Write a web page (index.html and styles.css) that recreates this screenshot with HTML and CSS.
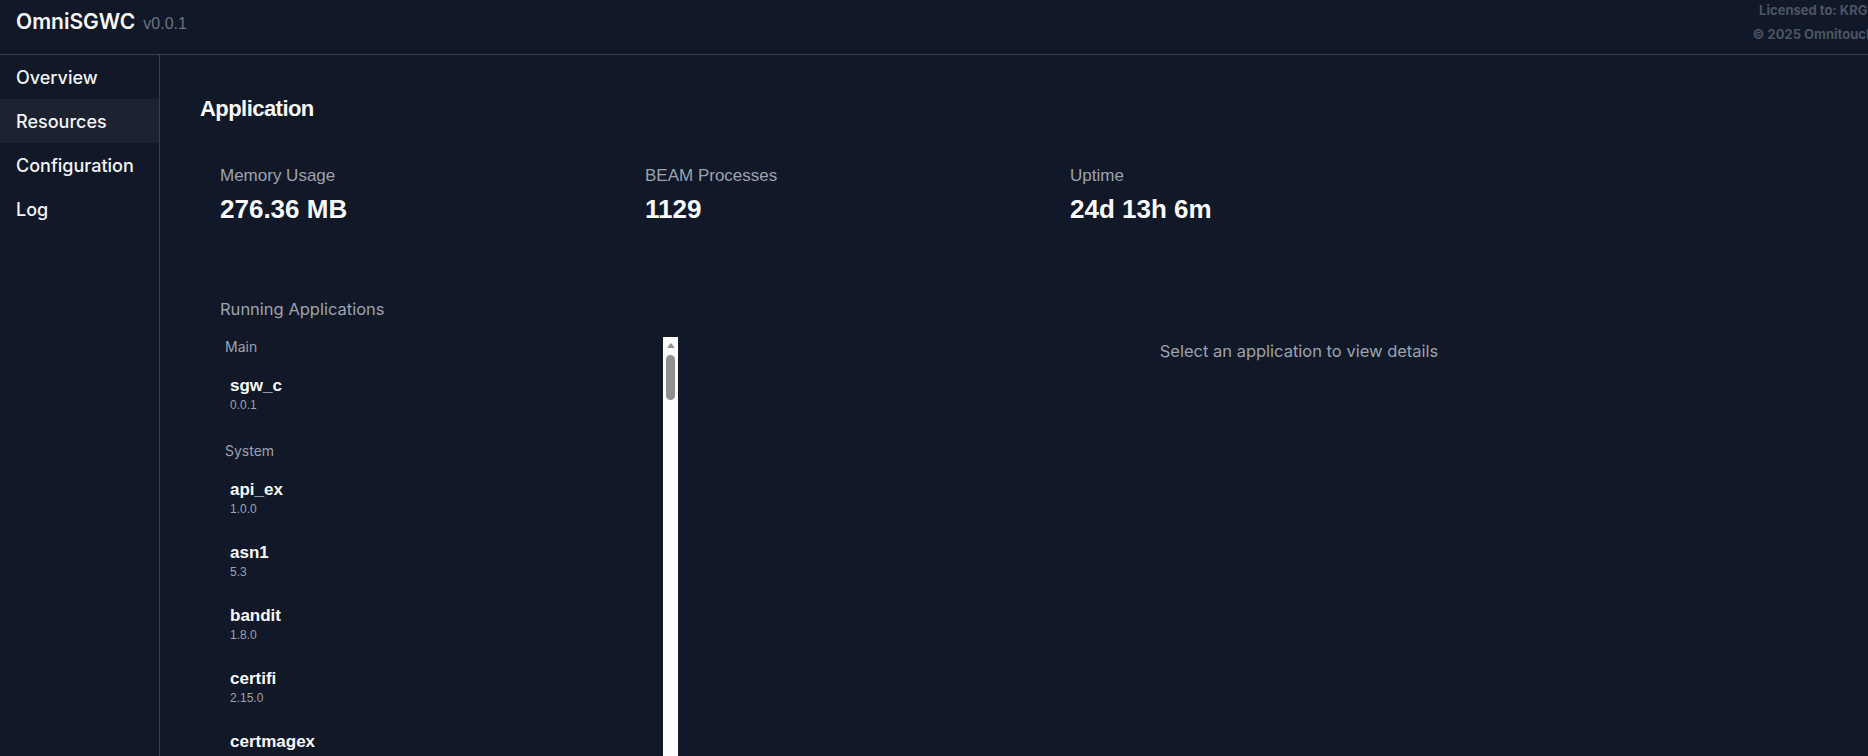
FILE: index.html
```html
<!DOCTYPE html>
<html lang="en">
<head>
<meta charset="utf-8">
<title>OmniSGWC - Resources</title>
<link rel="stylesheet" href="styles.css">
</head>
<body>
<div class="app">
  <header class="topbar">
    <div class="brand">
      <span class="brand-name">OmniSGWC</span>
      <span class="brand-ver">v0.0.1</span>
    </div>
    <div class="license">
      <div class="license-line">Licensed to: KRG</div>
      <div class="license-line">© 2025 Omnitouch</div>
    </div>
  </header>
  <div class="shell">
    <nav class="sidebar">
      <a class="nav-item">Overview</a>
      <a class="nav-item active">Resources</a>
      <a class="nav-item">Configuration</a>
      <a class="nav-item">Log</a>
    </nav>
    <main class="main">
      <h1 class="title">Application</h1>
      <section class="stats">
        <div class="stat">
          <div class="stat-label">Memory Usage</div>
          <div class="stat-value">276.36 MB</div>
        </div>
        <div class="stat">
          <div class="stat-label">BEAM Processes</div>
          <div class="stat-value">1129</div>
        </div>
        <div class="stat">
          <div class="stat-label">Uptime</div>
          <div class="stat-value">24d 13h 6m</div>
        </div>
      </section>
      <section class="apps">
        <div class="apps-label">Running Applications</div>
        <div class="apps-grid">
          <div class="apps-list">
            <div class="apps-scroll">
              <div class="group">
                <div class="group-title">Main</div>
                <div class="app-item"><div class="app-name">sgw_c</div><div class="app-ver">0.0.1</div></div>
              </div>
              <div class="group">
                <div class="group-title">System</div>
                <div class="app-item"><div class="app-name">api_ex</div><div class="app-ver">1.0.0</div></div>
                <div class="app-item"><div class="app-name">asn1</div><div class="app-ver">5.3</div></div>
                <div class="app-item"><div class="app-name">bandit</div><div class="app-ver">1.8.0</div></div>
                <div class="app-item"><div class="app-name">certifi</div><div class="app-ver">2.15.0</div></div>
                <div class="app-item"><div class="app-name">certmagex</div><div class="app-ver">0.1.0</div></div>
                <div class="app-item"><div class="app-name">combine</div><div class="app-ver">0.10.0</div></div>
                <div class="app-item"><div class="app-name">compiler</div><div class="app-ver">8.5.4</div></div>
                <div class="app-item"><div class="app-name">cowboy</div><div class="app-ver">2.13.0</div></div>
                <div class="app-item"><div class="app-name">cowlib</div><div class="app-ver">2.15.0</div></div>
                <div class="app-item"><div class="app-name">crypto</div><div class="app-ver">5.5.3</div></div>
                <div class="app-item"><div class="app-name">decimal</div><div class="app-ver">2.3.0</div></div>
                <div class="app-item"><div class="app-name">diameter</div><div class="app-ver">2.4.1</div></div>
              </div>
            </div>
            <div class="scrollbar" aria-hidden="true">
              <span class="scroll-arrow"></span>
              <span class="scroll-thumb"></span>
            </div>
          </div>
          <div class="apps-detail">
            <p class="detail-empty">Select an application to view details</p>
          </div>
        </div>
      </section>
    </main>
  </div>
</div>
</body>
</html>
```

FILE: styles.css
```css
html, body {
  margin: 0;
  padding: 0;
  height: 100%;
  overflow: hidden;
  background: #111827;
}

.app {
  width: 1956px;
  height: 756px;
  display: flex;
  flex-direction: column;
  color: #f9fafb;
  font-family: Inter, "Liberation Sans", sans-serif;
}

/* ---------- top bar ---------- */
.topbar {
  height: 54px;
  flex-shrink: 0;
  border-bottom: 1px solid #374151;
  display: flex;
  justify-content: space-between;
  align-items: flex-start;
  padding: 0 16px;
}

.brand {
  display: flex;
  align-items: baseline;
  padding-top: 8px;
}

.brand-name {
  font-size: 21px;
  line-height: 28px;
  font-weight: 600;
  color: #f9fafb;
}

.brand-ver {
  margin-left: 8px;
  font-family: "Liberation Sans", Arial, sans-serif;
  font-size: 16px;
  color: #6b7280;
}

.license {
  margin-right: 66px;
  padding-top: 2px;
  display: flex;
  flex-direction: column;
  align-items: center;
  gap: 8px;
  font-size: 13px;
  line-height: 16px;
  font-weight: 700;
  color: #4b5563;
  white-space: nowrap;
}

/* ---------- layout ---------- */
.shell {
  flex: 1;
  display: flex;
  min-height: 0;
}

.sidebar {
  width: 160px;
  flex-shrink: 0;
  box-sizing: border-box;
  border-right: 1px solid #374151;
  display: flex;
  flex-direction: column;
}

.nav-item {
  height: 44px;
  display: flex;
  align-items: center;
  padding: 0 16px;
  font-size: 18px;
  font-weight: 500;
  color: #f3f4f6;
  cursor: pointer;
}

.nav-item.active {
  background: #1c2230;
}

.main {
  flex: 1;
  padding: 40px;
  min-width: 0;
}

.title {
  margin: 0 0 21px;
  font-family: "Liberation Sans", Arial, sans-serif;
  font-size: 22px;
  line-height: 28px;
  font-weight: 700;
  letter-spacing: -0.025em;
  color: #f9fafb;
}

/* ---------- stats ---------- */
.stats {
  padding: 22px 20px 20px;
  display: grid;
  grid-template-columns: repeat(4, 1fr);
  gap: 24px;
}

.stat-label {
  font-family: "Liberation Sans", Arial, sans-serif;
  font-size: 17px;
  line-height: 20px;
  color: #9ca3af;
  margin-bottom: 7px;
}

.stat-value {
  font-family: "Liberation Sans", Arial, sans-serif;
  font-size: 26px;
  line-height: 32px;
  font-weight: 700;
  color: #f9fafb;
}

/* ---------- running applications ---------- */
.apps {
  margin-top: 54px;
  padding: 0 20px;
}

.apps-label {
  font-size: 16.5px;
  line-height: 20px;
  color: #9ca3af;
  margin-bottom: 18px;
}

.apps-grid {
  display: grid;
  grid-template-columns: 458px 1fr;
  gap: 24px;
  align-items: start;
}

.apps-list {
  height: 450px;
  display: flex;
}

.apps-scroll {
  flex: 1;
  overflow: hidden;
}

.scrollbar {
  width: 15px;
  flex-shrink: 0;
  background: #fcfcfd;
  display: flex;
  flex-direction: column;
  align-items: center;
  padding-top: 6px;
  box-sizing: border-box;
}

.scroll-arrow {
  width: 0;
  height: 0;
  border-left: 4.5px solid transparent;
  border-right: 4.5px solid transparent;
  border-bottom: 5px solid #8f8f8f;
}

.scroll-thumb {
  margin-top: 7px;
  width: 9px;
  height: 45px;
  border-radius: 4.5px;
  background: #909090;
}

.group + .group {
  margin-top: 15px;
}

.group-title {
  padding: 0 5px;
  font-size: 14px;
  line-height: 20px;
  color: #9ca3af;
  margin-bottom: 6px;
}

.app-item {
  padding: 12px 10px;
  cursor: pointer;
  font-family: "Liberation Sans", Arial, sans-serif;
}

.app-name {
  font-size: 17px;
  line-height: 22px;
  font-weight: 700;
  color: #f9fafb;
}

.app-ver {
  font-size: 12px;
  line-height: 17px;
  color: #9ca3af;
}

.apps-detail {
  padding-top: 4px;
  text-align: center;
}

.detail-empty {
  margin: 0;
  font-size: 16.5px;
  line-height: 20px;
  color: #9ca3af;
}
```
